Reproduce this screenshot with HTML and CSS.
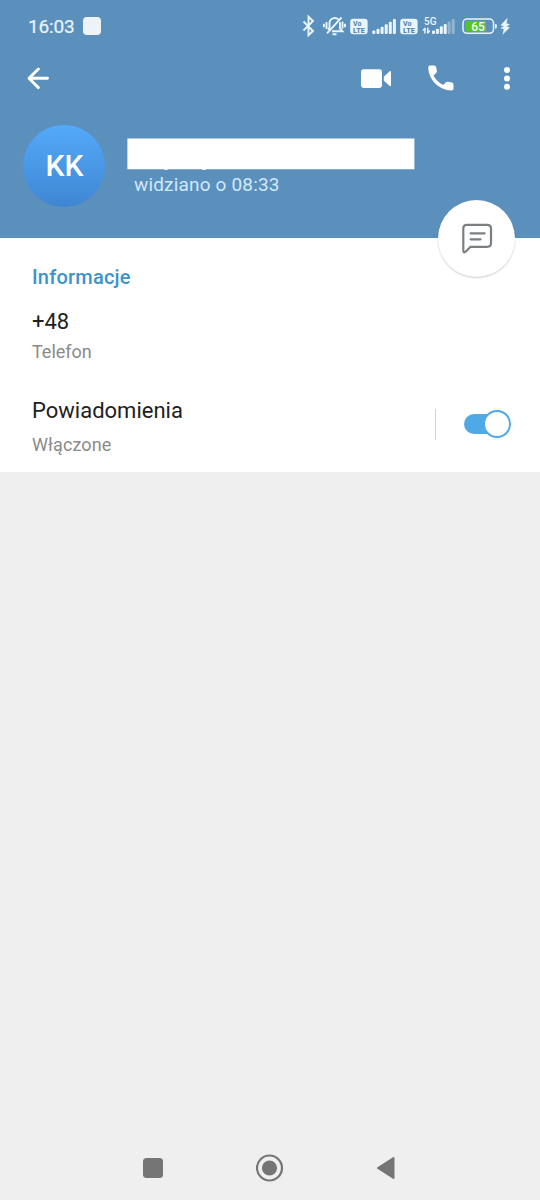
FILE: index.html
```html
<!DOCTYPE html>
<html lang="pl">
<head>
<meta charset="utf-8">
<title>Profil</title>
<link rel="stylesheet" href="styles.css">
</head>
<body>
<div class="screen">
  <header class="header">
    <div class="status">
      <span class="clock">16:03</span>
      <span class="notice"></span>
      <div class="status-icons">
        <svg class="i-bt" width="14" height="24" viewBox="302 14 14 24"><path d="M303.500 21.500l9.500 9.500-4.500 4.200V16.800l4.500 4.200-9.500 9.500" fill="none" stroke="#e9f5fc" stroke-width="1.900"/></svg>
        <svg class="i-bell" width="24" height="24" viewBox="322 14 24 24" fill="none" stroke="#e9f5fc" stroke-width="1.900"><path d="M338.500 19.300c-4-3-9-.5-9 4v4.200l-1.200 2.500M332 31.300h10.500l-2.500-3v-6M332.500 34.300h4M327 33.300L341.500 17.500M326.500 22v7M323.900 23.800v3.400M342.500 21.500v7M345 23.800v3.400"/></svg>
        <svg class="i-volte" width="18" height="24" viewBox="350 14 18 24"><rect x="350.200" y="18.800" width="17.400" height="15.400" rx="3" fill="#e9f5fc"/><text x="353" y="25.700" class="volte">Vo</text><text x="353" y="32.700" class="volte" textLength="12" lengthAdjust="spacingAndGlyphs">LTE</text></svg>
        <svg class="i-signal" width="24" height="24" viewBox="372 14 24 24" fill="#e9f5fc"><rect x="372.300" y="30.500" width="3" height="3.500" rx="1"/><rect x="376.500" y="28.800" width="3" height="5.200" rx="1"/><rect x="380.600" y="26.700" width="3" height="7.300" rx="1"/><rect x="384.700" y="24.300" width="3" height="9.700" rx="1"/><rect x="388.800" y="21.700" width="3" height="12.300" rx="1"/><rect x="392.900" y="19" width="3" height="15" rx="1"/></svg>
        <svg class="i-volte" width="18" height="24" viewBox="350 14 18 24"><rect x="350.200" y="18.800" width="17.400" height="15.400" rx="3" fill="#e9f5fc"/><text x="353" y="25.700" class="volte">Vo</text><text x="353" y="32.700" class="volte" textLength="12" lengthAdjust="spacingAndGlyphs">LTE</text></svg>
        <svg class="i-5g" width="34" height="24" viewBox="422 14 34 24" fill="#e9f5fc"><text x="424" y="24.800" class="net" textLength="12.500" lengthAdjust="spacingAndGlyphs">5G</text><path d="M424.200 27.800h1.500v5.700h-1.500v-3l-1.400.8v-1.500zM427 27.800h1.500v3l1.400-.8v1.500l-1.400 2h-1.500z"/><rect x="432" y="30.500" width="3" height="3.500" rx="1"/><rect x="435.900" y="28.800" width="3" height="5.200" rx="1"/><rect x="439.800" y="26.300" width="3" height="7.700" rx="1"/><rect x="443.700" y="24" width="3" height="10" rx="1"/><g opacity=".38"><rect x="447.600" y="21.600" width="3" height="12.400" rx="1"/><rect x="451.700" y="19" width="3" height="15" rx="1"/></g></svg>
        <svg class="i-batt" width="36" height="24" viewBox="462 14 36 24"><rect x="463" y="19" width="30.500" height="14.300" rx="4" fill="none" stroke="#e9f5fc" stroke-width="1.500"/><path d="M467.500 21h12.500v10.500h-12.500a2.500 2.500 0 0 1-2.500-2.500v-5.500a2.500 2.500 0 0 1 2.500-2.500z" fill="#55c321"/><path d="M480 21h6v10.500h-6z" fill="#69b75a"/><path d="M495 24h.8a1 1 0 0 1 1 1v2.500a1 1 0 0 1-1 1h-.8z" fill="#e9f5fc"/><text x="478" y="30.800" class="pct">65</text></svg>
        <svg class="i-bolt" width="12" height="24" viewBox="500 14 12 24"><path d="M507.300 18.300l-6.500 6.900 3.400 1-3.400 2 3.200.8-1.200 5.300 6.800-6.700-3.300-1 3.300-2.200-3.200-.8z" fill="#e9f5fc" stroke="#e9f5fc" stroke-width=".4"/></svg>
      </div>
    </div>
    <div class="toolbar">
      <svg class="back" width="24" height="24" viewBox="0 0 24 24"><path d="M12.400 3L3 12.300l9.400 9.300M3.300 12.300h18.200" fill="none" stroke="#fff" stroke-width="2.900" stroke-linecap="round" stroke-linejoin="round"/></svg>
      <svg class="video" width="30" height="24" viewBox="0 0 30 24" fill="#fff"><rect x="0" y="3.200" width="21" height="18.700" rx="2.800"/><path d="M23.500 9.900l4.900-4.500q1.200-.8 1.600.4v13.600q-.4 1.200-1.600.4l-4.900-4.500q-.7-.7-.7-1.500v-2.400q0-.8.7-1.500z"/></svg>
      <svg class="phone" width="26" height="26" viewBox="0 0 26 26"><path d="M1.900.6h4.300Q7.900.6 8.200 2.300L8.900 5.800Q9.100 7.100 8.200 8L5.500 10.500C7.600 14.500 11 17.900 15.200 20.100L17.900 17.300Q18.800 16.500 20 16.700L23.900 17.500Q25.500 17.900 25.500 19.500V23.700Q25.500 25.500 23.700 25.500C10.800 25.300.5 15 .3 2.300Q.3.800 1.900.6z" fill="#fff"/></svg>
      <svg class="more" width="8" height="24" viewBox="0 0 8 24" fill="#fff"><circle cx="4" cy="4" r="3"/><circle cx="4" cy="12.400" r="3"/><circle cx="4" cy="20.800" r="3"/></svg>
    </div>
    <div class="profile">
      <div class="avatar">KK</div>
      <div class="who">
        <svg class="name" width="288" height="32" viewBox="0 0 288 32" fill="#fff"><path d="M.4.4H287.400V31.200H.4z"/><path d="M36.500 31h5q-2.500 1.800-5 0zM74.500 31h5q-2.500 1.800-5 0z"/></svg>
        <div class="seen">widziano o 08:33</div>
      </div>
    </div>
    <div class="fab">
      <svg width="32" height="32" viewBox="0 0 32 32" fill="none" stroke="#7c7f82" stroke-width="2.200" stroke-linecap="round" stroke-linejoin="round"><path d="M5.800 2.800H26.200Q30 2.800 30 6.500V21Q30 24.800 26.200 24.800H9.500L4.700 29.700Q2.300 31.300 2.300 28.500V6.500Q2.300 2.800 5.800 2.800zM9.600 11.300H23.600M9.600 17.300H19.600"/></svg>
    </div>
  </header>
  <main class="info">
    <h2 class="heading">Informacje</h2>
    <div class="primary phone-number">+48</div>
    <div class="secondary phone-label">Telefon</div>
    <div class="notify">
      <div class="notify-text">
        <div class="primary">Powiadomienia</div>
        <div class="secondary enabled">Włączone</div>
      </div>
      <div class="divider"></div>
      <div class="switch"><div class="knob"></div></div>
    </div>
  </main>
  <nav class="nav">
    <svg width="20" height="20" viewBox="0 0 20 20"><rect width="20" height="20" rx="3.500" fill="#757575"/></svg>
    <svg class="home" width="28" height="28" viewBox="0 0 28 28"><circle cx="13.500" cy="14" r="12.500" fill="none" stroke="#757575" stroke-width="2.200"/><circle cx="13.500" cy="14" r="7.600" fill="#757575"/></svg>
    <svg class="nav-back" width="20" height="24" viewBox="0 0 20 24"><path d="M2 12L17.500 2V22z" fill="#757575" stroke="#757575" stroke-width="2" stroke-linejoin="round"/></svg>
  </nav>
</div>
</body>
</html>
```
FILE: styles.css
```css
* { box-sizing: border-box; }
body { margin: 0; font-family: Roboto, sans-serif; background: #efefef; }
svg { display: block; flex: none; }
.screen { width: 540px; height: 1200px; display: flex; flex-direction: column; }

.header { position: relative; height: 238px; background: #5b8fbc; }
.status { display: flex; align-items: center; height: 52px; padding: 0 28px; }
.clock { width: 47px; font-size: 19px; line-height: 24px; letter-spacing: -0.15px; font-weight: 400; color: #e9f5fc; -webkit-text-stroke: 0.2px #e9f5fc; margin-top: 1px; }
.notice { width: 18px; height: 18px; margin-left: 8px; border-radius: 4px; background: #eef3f8; }
.status-icons { display: flex; margin-left: 201px; }
.i-bell { margin-left: 6px; }
.i-volte { margin-left: 4px; }
.i-signal { margin-left: 4px; }
.i-5g { margin-left: 4px; }
.i-batt { margin-left: 6px; }
.i-bolt { margin-left: 2px; }
.volte { font-size: 7px; font-weight: 700; fill: #4d7da6; }
.net { font-size: 10px; font-weight: 500; }
.pct { font-size: 12px; font-weight: 500; fill: #f4fff4; text-anchor: middle; }

.toolbar { display: flex; align-items: center; height: 52px; padding: 0 29px 0 26px; }
.video { margin-left: 311px; }
.phone { margin-left: 37px; }
.more { margin-left: 49px; }

.profile { display: flex; padding: 21px 23.400px 0; }
.avatar { flex: none; width: 82px; height: 82px; border-radius: 50%; background: linear-gradient(#53aafa, #3f86d2); color: #fff; font-size: 30px; font-weight: 500; line-height: 82px; text-align: center; }
.who { padding: 13px 0 0 21.600px; }
.seen { margin: 3px 0 0 7px; font-size: 19px; line-height: 24px; letter-spacing: 0.17px; color: #d0e9fa; white-space: nowrap; }
.fab { position: absolute; left: 438px; top: 199.500px; width: 77px; height: 77px; border-radius: 50%; background: #fff; display: flex; align-items: center; justify-content: center; box-shadow: 0 1px 2px rgba(0, 0, 0, 0.2); }

.info { height: 234px; padding: 27px 29px 0 32px; background: #fff; }
.heading { margin: 0; font-size: 20px; line-height: 24px; font-weight: 500; letter-spacing: 0.2px; color: #3c93c8; }
.primary { font-size: 22px; line-height: 26px; color: #212121; }
.secondary { font-size: 18px; line-height: 22px; color: #8a8a8a; }
.phone-number { margin-top: 20px; }
.phone-label { margin-top: 6px; }
.notify { display: flex; margin-top: 34px; }
.notify-text { width: 403px; padding-top: 1px; }
.enabled { margin-top: 10px; letter-spacing: 0.1px; }
.divider { width: 1px; height: 31px; margin-top: 12px; background: #d4d4d4; }
.switch { display: flex; justify-content: flex-end; align-items: center; width: 46px; height: 20px; margin: 17px 0 0 28px; border-radius: 10px; background: #50a9e6; }
.knob { flex: none; width: 28px; height: 28px; margin-right: -1px; border-radius: 50%; border: 2.500px solid #50a9e6; background: #fff; }

.nav { display: flex; align-items: center; height: 65px; margin-top: auto; padding-left: 143px; }
.home { margin-left: 93px; }
.nav-back { margin-left: 92px; }
```
